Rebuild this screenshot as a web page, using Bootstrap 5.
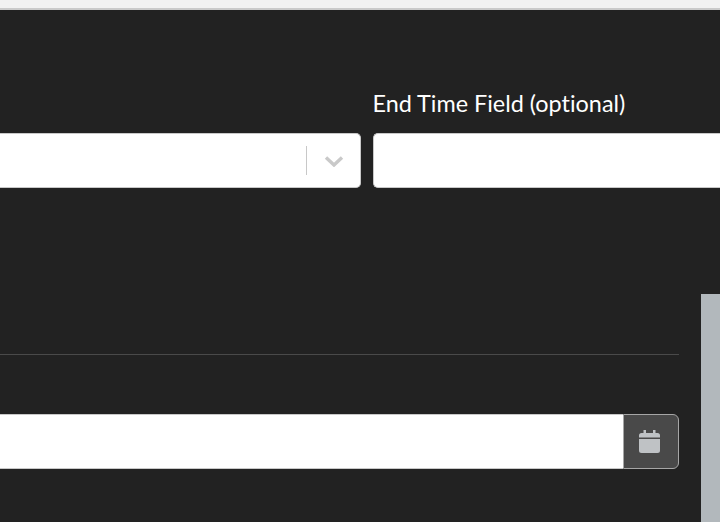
<!DOCTYPE html>
<html lang="en">
<head>
<meta charset="utf-8">
<title>End Time Field</title>
<link href="https://cdn.jsdelivr.net/npm/bootstrap@5.3.0/dist/css/bootstrap.min.css" rel="stylesheet">
<style>
html, body { height: 522px; overflow: hidden; }
body { background: #222222; font-family: Lato, "Liberation Sans", sans-serif; color: #fff; }
.top-strip { height: 10px; background: #f1f1f1; border-bottom: 2px solid #c9c9c9; }
.upper-zone { height: 284px; padding-top: 78px; }
.field-grid { gap: 12px; }
.field-left { width: 361px; flex: none; }
.field-right { flex: 1 1 auto; }
.field-label { display: block; font-size: 23.4px; font-variant-ligatures: none; line-height: 30px; margin-bottom: 15px; height: 30px; margin-left: -.5px; }
.white-box { height: 55px; background: #fff; border: 1px solid #c8c8c8; }
.box-open-left { border-left: 0; border-radius: 0 5px 5px 0; }
.box-open-right { border-right: 0; border-radius: 5px 0 0 5px; }
.sel-sep { width: 1.500px; height: 29px; background: #c8c8c8; }
.sel-arrow { width: 53px; }
.lower-content { padding-right: 22px; }
.rule-line { height: 1px; background: #4a4a4a; margin-top: 60px; margin-bottom: 59px; }
.date-input { height: 55px; background: #fff; border: 1px solid #c8c8c8; border-width: 1px 0; }
.date-btn { width: 56.500px; height: 55px; padding-right: 3px; background: #494949; border: 1px solid #a6a6a6; border-radius: 0 6px 6px 0; }
.side-thumb { width: 19px; height: 228px; background: #b2b8bc; flex: none; }
</style>
</head>
<body>
<div class="top-strip"></div>
<div class="upper-zone">
  <div class="d-flex field-grid">
    <div class="field-left">
      <span class="field-label">&nbsp;</span>
      <div class="white-box box-open-left d-flex align-items-center justify-content-end">
        <div class="sel-sep"></div>
        <div class="sel-arrow d-flex justify-content-center">
          <svg width="20" height="12" viewBox="0 0 20 12" aria-hidden="true"><path d="M2 2.500 10 10 18 2.500" fill="none" stroke="#c9c9c9" stroke-width="3.400"/></svg>
        </div>
      </div>
    </div>
    <div class="field-right">
      <label class="field-label">End Time Field (optional)</label>
      <div class="white-box box-open-right"></div>
    </div>
  </div>
</div>
<div class="d-flex">
  <div class="lower-content flex-grow-1">
    <div class="rule-line"></div>
    <div class="d-flex">
      <div class="date-input flex-grow-1"></div>
      <div class="date-btn d-flex align-items-center justify-content-center">
        <svg width="21" height="23" viewBox="0 0 21 23" aria-hidden="true"><path fill="#bfc2c5" d="M4.500 0h2.500v3h7V0h2.500v3h2A2.500 2.500 0 0 1 21 5.500V7.500H0V5.500A2.500 2.500 0 0 1 2.500 3h2ZM0 9h21V20.500A2.500 2.500 0 0 1 18.500 23H2.500A2.500 2.500 0 0 1 0 20.500Z"/></svg>
      </div>
    </div>
  </div>
  <div class="side-thumb"></div>
</div>
</body>
</html>
